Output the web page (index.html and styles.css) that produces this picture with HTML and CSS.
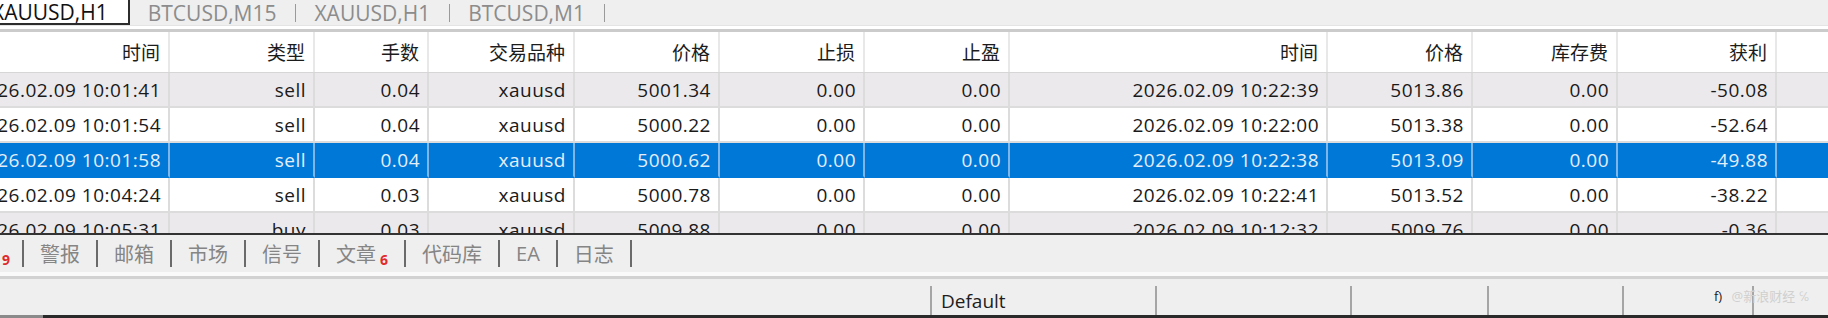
FILE: index.html
```html
<!DOCTYPE html>
<html lang="zh-CN">

<head>
    <meta charset="UTF-8">
    <meta name="viewport" content="width=device-width, initial-scale=1.0">
    <title>交易历史</title>
    <link rel="stylesheet" href="styles.css">
</head>

<body>

    <!-- Pestañas de gráficos -->
    <div class="chart-tabs">
        <span class="chart-tab active">XAUUSD,H1</span>
        <span class="chart-tab">BTCUSD,M15</span>
        <span class="tab-sep"></span>
        <span class="chart-tab">XAUUSD,H1</span>
        <span class="tab-sep"></span>
        <span class="chart-tab">BTCUSD,M1</span>
        <span class="tab-sep"></span>
    </div>
    <div class="edge"></div>

    <!-- Historial -->
    <div class="grid-wrap">
        <div class="grid">
            <div class="row head">
                <div class="cell">时间</div>
                <div class="cell">类型</div>
                <div class="cell">手数</div>
                <div class="cell">交易品种</div>
                <div class="cell">价格</div>
                <div class="cell">止损</div>
                <div class="cell">止盈</div>
                <div class="cell">时间</div>
                <div class="cell">价格</div>
                <div class="cell">库存费</div>
                <div class="cell">获利</div>
                <div class="cell"></div>
            </div>
            <div class="row odd">
                <div class="cell">2026.02.09 10:01:41</div>
                <div class="cell">sell</div>
                <div class="cell">0.04</div>
                <div class="cell">xauusd</div>
                <div class="cell">5001.34</div>
                <div class="cell">0.00</div>
                <div class="cell">0.00</div>
                <div class="cell">2026.02.09 10:22:39</div>
                <div class="cell">5013.86</div>
                <div class="cell">0.00</div>
                <div class="cell">-50.08</div>
                <div class="cell"></div>
            </div>
            <div class="row">
                <div class="cell">2026.02.09 10:01:54</div>
                <div class="cell">sell</div>
                <div class="cell">0.04</div>
                <div class="cell">xauusd</div>
                <div class="cell">5000.22</div>
                <div class="cell">0.00</div>
                <div class="cell">0.00</div>
                <div class="cell">2026.02.09 10:22:00</div>
                <div class="cell">5013.38</div>
                <div class="cell">0.00</div>
                <div class="cell">-52.64</div>
                <div class="cell"></div>
            </div>
            <div class="row selected">
                <div class="cell">2026.02.09 10:01:58</div>
                <div class="cell">sell</div>
                <div class="cell">0.04</div>
                <div class="cell">xauusd</div>
                <div class="cell">5000.62</div>
                <div class="cell">0.00</div>
                <div class="cell">0.00</div>
                <div class="cell">2026.02.09 10:22:38</div>
                <div class="cell">5013.09</div>
                <div class="cell">0.00</div>
                <div class="cell">-49.88</div>
                <div class="cell"></div>
            </div>
            <div class="row">
                <div class="cell">2026.02.09 10:04:24</div>
                <div class="cell">sell</div>
                <div class="cell">0.03</div>
                <div class="cell">xauusd</div>
                <div class="cell">5000.78</div>
                <div class="cell">0.00</div>
                <div class="cell">0.00</div>
                <div class="cell">2026.02.09 10:22:41</div>
                <div class="cell">5013.52</div>
                <div class="cell">0.00</div>
                <div class="cell">-38.22</div>
                <div class="cell"></div>
            </div>
            <div class="row odd">
                <div class="cell">2026.02.09 10:05:31</div>
                <div class="cell">buy</div>
                <div class="cell">0.03</div>
                <div class="cell">xauusd</div>
                <div class="cell">5009.88</div>
                <div class="cell">0.00</div>
                <div class="cell">0.00</div>
                <div class="cell">2026.02.09 10:12:32</div>
                <div class="cell">5009.76</div>
                <div class="cell">0.00</div>
                <div class="cell">-0.36</div>
                <div class="cell"></div>
            </div>
        </div>
    </div>

    <!-- Pestañas inferiores -->
    <div class="panel-tabs">
        <span class="panel-tab first">历史<b class="badge">9</b></span>
        <span class="panel-tab">警报</span>
        <span class="panel-tab">邮箱</span>
        <span class="panel-tab">市场</span>
        <span class="panel-tab">信号</span>
        <span class="panel-tab">文章<b class="badge">6</b></span>
        <span class="panel-tab">代码库</span>
        <span class="panel-tab">EA</span>
        <span class="panel-tab">日志</span>
    </div>
    <div class="edge-bottom"></div>

    <!-- Barra de estado -->
    <div class="status">
        <div class="status-cell wide"></div>
        <div class="status-cell profile">Default</div>
        <div class="status-cell w195"></div>
        <div class="status-cell w137"></div>
        <div class="status-cell w135"></div>
        <div class="status-cell w130"></div>
        <div class="status-cell"></div>
        <span class="watermark"><i>f)</i> @新浪财经 ℅</span>
    </div>
    <div class="taskbar"><span class="taskbar-start"></span></div>

</body>

</html>
```

FILE: styles.css
```css
body {
    margin: 0;
    width: 1828px;
    height: 318px;
    overflow: hidden;
    background-color: #efefef;
    color: #1a1a1a;
    font-family: "Open Sans", "Noto Sans CJK SC", sans-serif;
}

/* Pestañas de gráficos */
.chart-tabs {
    display: flex;
    align-items: center;
    height: 25px;
    margin-left: -30px;
}

.chart-tab {
    display: flex;
    align-items: center;
    height: 25px;
    padding: 0 19px 0 18px;
    box-sizing: border-box;
    font-size: 21px;
    color: #8c8c8c;
    white-space: nowrap;
}

.chart-tab.active {
    padding: 0 20px;
    background: #fff;
    color: #111;
    border: 2px solid #2c2c2c;
    border-top: none;
}

.tab-sep {
    width: 1px;
    height: 18px;
    background: #9a9a9a;
}

.edge {
    height: 3px;
    background: #fff;
    border-top: 1px solid #e4e4e4;
    border-bottom: 3px solid #cbcbcb;
}

/* Historial */
.grid-wrap {
    height: 201px;
    overflow: hidden;
    background: #fff;
}

.grid {
    margin-left: -41px;
}

.row {
    display: grid;
    grid-template-columns: 211px 145px 114px 146px 145px 145px 145px 318px 145px 145px 159px 80px;
    height: 35px;
    background: #fff;
    font-size: 19px;
    letter-spacing: 0.5px;
}

.row.odd {
    background: #ece9ed;
}

.row.head {
    height: 41px;
    background: #fff;
    border-bottom: 1px solid #d6d6d6;
    box-sizing: border-box;
    color: #1c1c1c;
    letter-spacing: 0;
}

.cell {
    display: flex;
    align-items: center;
    justify-content: flex-end;
    padding-right: 7px;
    border-right: 2px solid #dcdcdc;
    border-bottom: 2px solid #dcdcdc;
    box-sizing: border-box;
    white-space: nowrap;
    overflow: hidden;
}

.row.head .cell {
    border-bottom: none;
    border-right-color: #e8e8e8;
    padding-right: 8px;
}

.row.selected {
    background: #0078d7;
    color: #e4eefa;
}

.row.selected .cell {
    border-right-color: #7fb6ea;
    border-bottom-color: #0078d7;
}

/* Pestañas inferiores */
.panel-tabs {
    display: flex;
    align-items: center;
    height: 37px;
    border-top: 2px solid #333;
    margin-left: -58px;
}

.panel-tab {
    display: flex;
    align-items: center;
    height: 27px;
    padding: 0 16px;
    border-right: 2px solid #6a6a6a;
    font-size: 20px;
    color: #858585;
    white-space: nowrap;
}

.panel-tab.first {
    padding-right: 12px;
}

.badge {
    align-self: flex-end;
    margin-left: 4px;
    font-size: 14px;
    line-height: 14px;
    color: #e02b2b;
}

.edge-bottom {
    height: 4px;
    background: #fafafa;
    border-bottom: 3px solid #d2d2d2;
}

/* Barra de estado */
.status {
    position: relative;
    display: flex;
    align-items: flex-end;
    height: 36px;
}

.status-cell {
    display: flex;
    align-items: center;
    height: 29px;
    padding-left: 9px;
    border-right: 2px solid #a5a5a5;
    box-sizing: border-box;
    font-size: 19px;
    color: #1e1e1e;
}

.status-cell.wide {
    width: 932px;
}

.status-cell.profile {
    width: 225px;
}

.w195 {
    width: 195px;
}

.w137 {
    width: 137px;
}

.w135 {
    width: 135px;
}

.w130 {
    width: 130px;
}

.status-cell:last-of-type {
    border-right: none;
}

.watermark {
    position: absolute;
    left: 1714px;
    top: 7px;
    font-size: 13px;
    color: #d0d0d0;
    white-space: nowrap;
}

.watermark i {
    font-style: normal;
    color: #222;
    margin-right: 6px;
}

.taskbar {
    height: 3px;
    background: #2a2a2a;
}

.taskbar-start {
    display: block;
    width: 43px;
    height: 3px;
    background: #8a8a8a;
}
```
